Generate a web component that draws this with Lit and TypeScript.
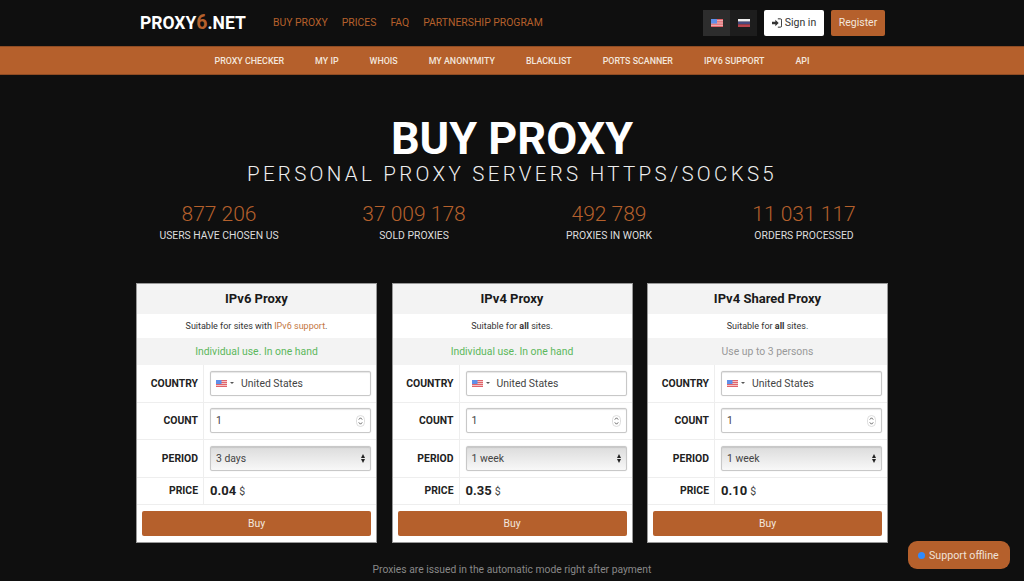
import { LitElement, css, html, svg } from 'lit';
import { customElement } from 'lit/decorators.js';

const usFlag = svg`<svg class="flag" viewBox="0 0 20 14" width="12" height="8" preserveAspectRatio="none">
  <rect width="20" height="14" fill="#f3c4c4"/>
  <path d="M0 0h20v2H0zM0 4h20v2H0zM0 8h20v2H0zM0 12h20v2H0z" fill="#e0636b"/>
  <rect width="10" height="8" fill="#5f8fe8"/>
</svg>`;

const ruFlag = svg`<svg class="flag" viewBox="0 0 12 9" width="12" height="8" preserveAspectRatio="none">
  <rect width="12" height="3" fill="#f0f0f0"/>
  <rect y="3" width="12" height="3" fill="#46497e"/>
  <rect y="6" width="12" height="3" fill="#b8434c"/>
</svg>`;

const signInIcon = svg`<svg viewBox="0 0 12 12" width="10" height="10">
  <path d="M0 4.500h4V2l4 4-4 4V7.500H0z" fill="#333"/>
  <path d="M7 1h3a1.500 1.500 0 0 1 1.500 1.500v7A1.500 1.500 0 0 1 10 11H7" fill="none" stroke="#333" stroke-width="1.200"/>
</svg>`;

const spinIcon = svg`<svg class="spin" viewBox="0 0 9 12" width="9" height="12">
  <rect x="0.500" y="0.500" width="8" height="11" rx="4" fill="#fff" stroke="#ddd"/>
  <path d="M2.800 4.600 4.500 2.800 6.200 4.600M2.800 7.400 4.500 9.200 6.200 7.400" fill="none" stroke="#555" stroke-width="0.900"/>
</svg>`;

const plans = [
  {
    title: 'IPv6 Proxy',
    suit: html`Suitable for sites with <span class="accent">IPv6 support</span>.`,
    use: 'Individual use. In one hand',
    green: true,
    period: '3 days',
    price: '0.04',
  },
  {
    title: 'IPv4 Proxy',
    suit: html`Suitable for <b>all</b> sites.`,
    use: 'Individual use. In one hand',
    green: true,
    period: '1 week',
    price: '0.35',
  },
  {
    title: 'IPv4 Shared Proxy',
    suit: html`Suitable for <b>all</b> sites.`,
    use: 'Use up to 3 persons',
    green: false,
    period: '1 week',
    price: '0.10',
  },
];

const stats = [
  ['877 206', 'USERS HAVE CHOSEN US'],
  ['37 009 178', 'SOLD PROXIES'],
  ['492 789', 'PROXIES IN WORK'],
  ['11 031 117', 'ORDERS PROCESSED'],
];

const topLinks = ['BUY PROXY', 'PRICES', 'FAQ', 'PARTNERSHIP PROGRAM'];
const subLinks = ['PROXY CHECKER', 'MY IP', 'WHOIS', 'MY ANONYMITY', 'BLACKLIST', 'PORTS SCANNER', 'IPV6 SUPPORT', 'API'];

@customElement('app-root')
export class AppRoot extends LitElement {
  static styles = css`
    :host {
      display: block;
      height: 581px;
      overflow: hidden;
      position: relative;
      background: #0f0f0f;
      font-family: Roboto, "Liberation Sans", sans-serif;
      color: #fff;
    }

    .top {
      height: 45px;
      display: flex;
      align-items: center;
      padding: 0 139px 0 140px;
      box-sizing: border-box;
    }

    .logo {
      font-size: 17.5px;
      font-weight: 700;
      width: 133px;
      white-space: nowrap;
    }

    .logo span {
      color: #b5602c;
      font-size: 19.5px;
    }

    .top-links {
      display: flex;
      gap: 14px;
      flex: 1;
    }

    .top-links a {
      color: #b5602c;
      font-size: 10.4px;
    }

    .langs {
      display: flex;
      height: 26px;
      margin-right: 7px;
    }

    .lang {
      width: 27px;
      display: flex;
      align-items: center;
      justify-content: center;
      background: #1d1d1d;
    }

    .lang.on {
      background: #2d2d2d;
    }

    .flag {
      display: block;
    }

    .btn {
      height: 26px;
      box-sizing: border-box;
      display: flex;
      align-items: center;
      justify-content: center;
      gap: 3px;
      font-size: 10.5px;
      border-radius: 2px;
    }

    .signin {
      width: 60px;
      background: #fff;
      color: #333;
      margin-right: 7px;
    }

    .register {
      width: 54px;
      background: #b5602c;
      color: #f3e6dc;
    }

    .sub {
      height: 29px;
      box-sizing: border-box;
      margin-top: 1px;
      background: #b5602c;
      border-top: 1px solid #8f4c24;
      border-bottom: 1px solid #8f4c24;
      display: flex;
      justify-content: center;
      align-items: center;
      gap: 31px;
      font-size: 8.9px;
      font-weight: 500;
      color: #f3e6dc;
    }

    .hero {
      text-align: center;
      padding-top: 40px;
    }

    h1 {
      margin: 0;
      font-size: 45px;
      line-height: 48px;
      font-weight: 700;
    }

    .tagline {
      font-size: 20.5px;
      font-weight: 300;
      line-height: 24px;
      letter-spacing: 3.3px;
      margin-top: -1px;
      color: #eee;
    }

    .stats {
      display: grid;
      grid-template-columns: repeat(4, 195px);
      justify-content: center;
      margin: 15px 0 0 -1px;
      text-align: center;
    }

    .stat b {
      display: block;
      font-size: 21px;
      line-height: 27px;
      font-weight: 300;
      color: #b5602c;
    }

    .stat span {
      display: block;
      font-size: 10.4px;
      line-height: 16px;
      color: #ddd;
    }

    .plans {
      display: flex;
      gap: 14.5px;
      justify-content: center;
      margin-top: 39px;
    }

    .card {
      width: 241px;
      box-sizing: border-box;
      background: #fff;
      color: #222;
      border: 1px solid #999;
    }

    .card h2 {
      margin: 0;
      height: 30px;
      line-height: 29px;
      background: #f3f3f3;
      text-align: center;
      font-size: 13px;
      font-weight: 700;
      color: #1a1a1a;
    }

    .suit {
      height: 24px;
      line-height: 24px;
      text-align: center;
      font-size: 9px;
      color: #333;
    }

    .suit b {
      font-weight: 700;
    }

    .accent {
      color: #c4773f;
    }

    .use {
      height: 27px;
      line-height: 28px;
      text-align: center;
      font-size: 10.4px;
      background: #f3f3f3;
      color: #999;
    }

    .use.green {
      color: #5cb85c;
    }

    .row {
      display: grid;
      grid-template-columns: 67px 1fr;
      height: 37.5px;
      border-bottom: 1px solid #eee;
      box-sizing: border-box;
    }

    .row.price {
      height: 27px;
    }

    .row label {
      display: flex;
      align-items: center;
      justify-content: flex-end;
      padding-right: 5px;
      font-size: 10.4px;
      font-weight: 700;
      color: #222;
      border-right: 1px solid #eee;
    }

    .field {
      display: flex;
      align-items: center;
      padding: 0 5px 0 6px;
    }

    .box {
      flex: 1;
      height: 25px;
      box-sizing: border-box;
      border: 1px solid #c8c8c8;
      border-radius: 2px;
      box-shadow: inset 0 1px 1px rgba(0, 0, 0, 0.1), 0 0 1px rgba(0, 0, 0, 0.2);
      display: flex;
      align-items: center;
      padding: 0 5px;
      font-size: 10.4px;
      color: #444;
    }

    .box .flag {
      width: 11px;
      height: 7px;
    }

    .caret {
      width: 0;
      height: 0;
      border: 2px solid transparent;
      border-top: 2.5px solid #555;
      border-bottom: 0;
      margin: 0 7px 0 3px;
    }

    .spin {
      margin-left: auto;
      display: block;
    }

    .select {
      background: linear-gradient(#dcdcdc, #f8f8f8);
      justify-content: space-between;
      padding-right: 5px;
    }

    .arrows {
      display: flex;
      flex-direction: column;
      gap: 1px;
    }

    .arrows i {
      display: block;
      width: 0;
      height: 0;
      border-left: 2.5px solid transparent;
      border-right: 2.5px solid transparent;
    }

    .arrows i:first-child {
      border-bottom: 4px solid #222;
    }

    .arrows i:last-child {
      border-top: 4px solid #222;
    }

    .amount {
      font-size: 13px;
      font-weight: 700;
      color: #222;
      display: flex;
      align-items: baseline;
      gap: 3px;
      padding-left: 6px;
      align-self: center;
    }

    .amount span {
      font-size: 10.5px;
      font-weight: 400;
      color: #444;
    }

    .buy {
      margin: 6px 5px;
      height: 25.5px;
      line-height: 25px;
      background: #b5602c;
      border-radius: 2px;
      text-align: center;
      font-size: 10.4px;
      color: #f3e6dc;
    }

    .note {
      text-align: center;
      font-size: 10.3px;
      line-height: 14px;
      color: #888;
      margin-top: 20px;
    }

    .support {
      position: absolute;
      left: 908px;
      top: 541px;
      width: 102px;
      height: 28px;
      box-sizing: border-box;
      border-radius: 9px;
      background: #b5602c;
      color: #f0e2d8;
      font-size: 10.7px;
      display: flex;
      align-items: center;
      padding-left: 10px;
      gap: 4px;
      white-space: nowrap;
    }

    .dot {
      width: 7px;
      height: 7px;
      border-radius: 50%;
      background: #2f8bff;
    }
  `;

  renderPlan(p: (typeof plans)[number]) {
    return html`
      <div class="card">
        <h2>${p.title}</h2>
        <div class="suit">${p.suit}</div>
        <div class="use ${p.green ? 'green' : ''}">${p.use}</div>
        <div class="row">
          <label>COUNTRY</label>
          <div class="field">
            <div class="box">${usFlag}<i class="caret"></i>United States</div>
          </div>
        </div>
        <div class="row">
          <label>COUNT</label>
          <div class="field">
            <div class="box">1${spinIcon}</div>
          </div>
        </div>
        <div class="row">
          <label>PERIOD</label>
          <div class="field">
            <div class="box select">${p.period}<span class="arrows"><i></i><i></i></span></div>
          </div>
        </div>
        <div class="row price">
          <label>PRICE</label>
          <div class="amount">${p.price} <span>$</span></div>
        </div>
        <div class="buy">Buy</div>
      </div>
    `;
  }

  render() {
    return html`
      <header class="top">
        <div class="logo">PROXY<span>6</span>.NET</div>
        <nav class="top-links">${topLinks.map((l) => html`<a>${l}</a>`)}</nav>
        <div class="langs">
          <div class="lang on">${usFlag}</div>
          <div class="lang">${ruFlag}</div>
        </div>
        <div class="btn signin">${signInIcon}Sign in</div>
        <div class="btn register">Register</div>
      </header>
      <nav class="sub">${subLinks.map((l) => html`<a>${l}</a>`)}</nav>
      <section class="hero">
        <h1>BUY PROXY</h1>
        <div class="tagline">PERSONAL PROXY SERVERS HTTPS/SOCKS5</div>
      </section>
      <section class="stats">
        ${stats.map(([n, t]) => html`<div class="stat"><b>${n}</b><span>${t}</span></div>`)}
      </section>
      <section class="plans">${plans.map((p) => this.renderPlan(p))}</section>
      <div class="note">Proxies are issued in the automatic mode right after payment</div>
      <div class="support"><i class="dot"></i>Support offline</div>
    `;
  }
}
